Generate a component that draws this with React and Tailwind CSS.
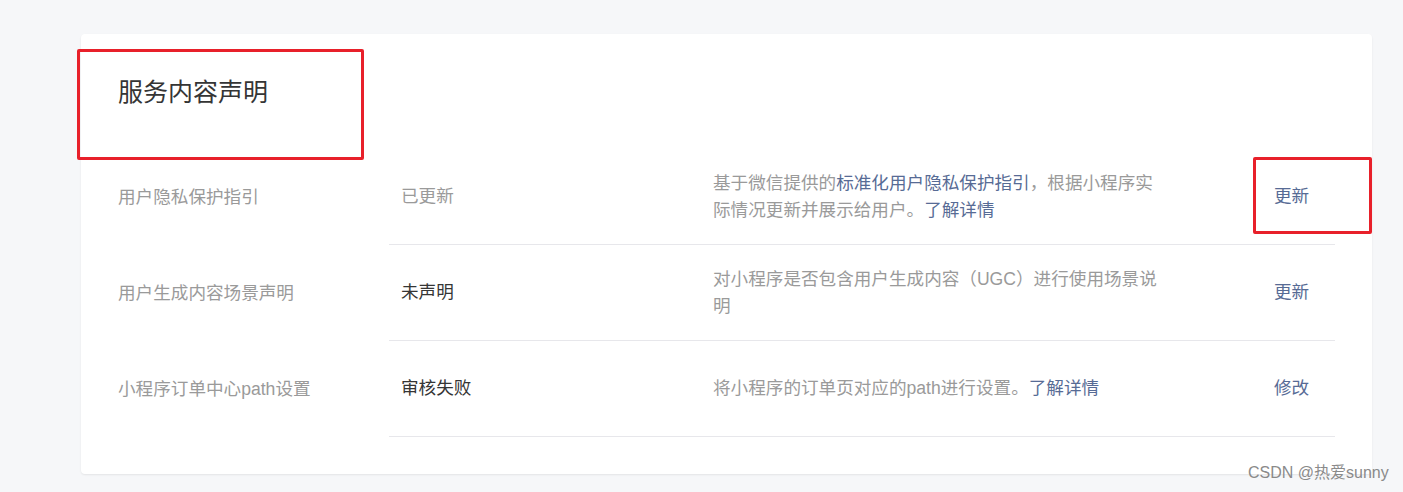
import React from 'react';

const rows = [
  {
    label: '用户隐私保护指引',
    status: '已更新',
    statusMuted: true,
    desc: (
      <>
        基于微信提供的<span className="text-[#576b95]">标准化用户隐私保护指引</span>，根据小程序实际情况更新并展示给用户。
        <span className="text-[#576b95]">了解详情</span>
      </>
    ),
    action: '更新',
  },
  {
    label: '用户生成内容场景声明',
    status: '未声明',
    desc: <>对小程序是否包含用户生成内容（UGC）进行使用场景说明</>,
    action: '更新',
  },
  {
    label: '小程序订单中心path设置',
    status: '审核失败',
    desc: (
      <>
        将小程序的订单页对应的path进行设置。<span className="text-[#576b95]">了解详情</span>
      </>
    ),
    action: '修改',
  },
];

const App = () => {
  return (
    <div className="relative h-[492px] overflow-hidden bg-[#f6f7f9] pt-[34px] pl-[81px] pr-[31px] font-['Liberation_Sans','Noto_Sans_CJK_SC',sans-serif]">
      <div className="bg-white rounded-[4px] shadow-[0_1px_2px_rgba(0,0,0,0.08)] pt-[40px] pb-[37px] px-[37px]">
        <h2 className="text-[25px] leading-[37px] font-normal text-[#353535] mb-[38px]">服务内容声明</h2>

        <div>
          {rows.map((row) => (
            <div key={row.label} className="grid grid-cols-[271px_1fr]">
              <div className="flex items-center text-[17.6px] text-[#9a9a9a]">{row.label}</div>
              <div className="grid grid-cols-[324px_1fr_61px] items-center h-[96px] border-b border-[#e7e7eb]">
                <div
                  className={`pl-[12px] text-[17.6px] ${
                    row.statusMuted ? 'text-[#9a9a9a]' : 'text-[#353535]'
                  }`}
                >
                  {row.status}
                </div>
                <div className="max-w-[450px] text-[17.6px] leading-[27px] text-[#9a9a9a]">{row.desc}</div>
                <div className="text-[17.6px] text-[#576b95]">{row.action}</div>
              </div>
            </div>
          ))}
        </div>
      </div>

      {/* annotation boxes */}
      <div className="absolute left-[77px] top-[49px] w-[287px] h-[111px] border-[3px] border-[#e8202a] rounded-[2px]" />
      <div className="absolute left-[1253px] top-[157px] w-[119px] h-[77px] border-[3px] border-[#e8202a] rounded-[2px]" />

      {/* watermark */}
      <div className="absolute left-[1248px] top-[462px] text-[16px] leading-[22px] text-[#8a8a8a]">
        CSDN @热爱sunny
      </div>
    </div>
  );
};

export default App;
